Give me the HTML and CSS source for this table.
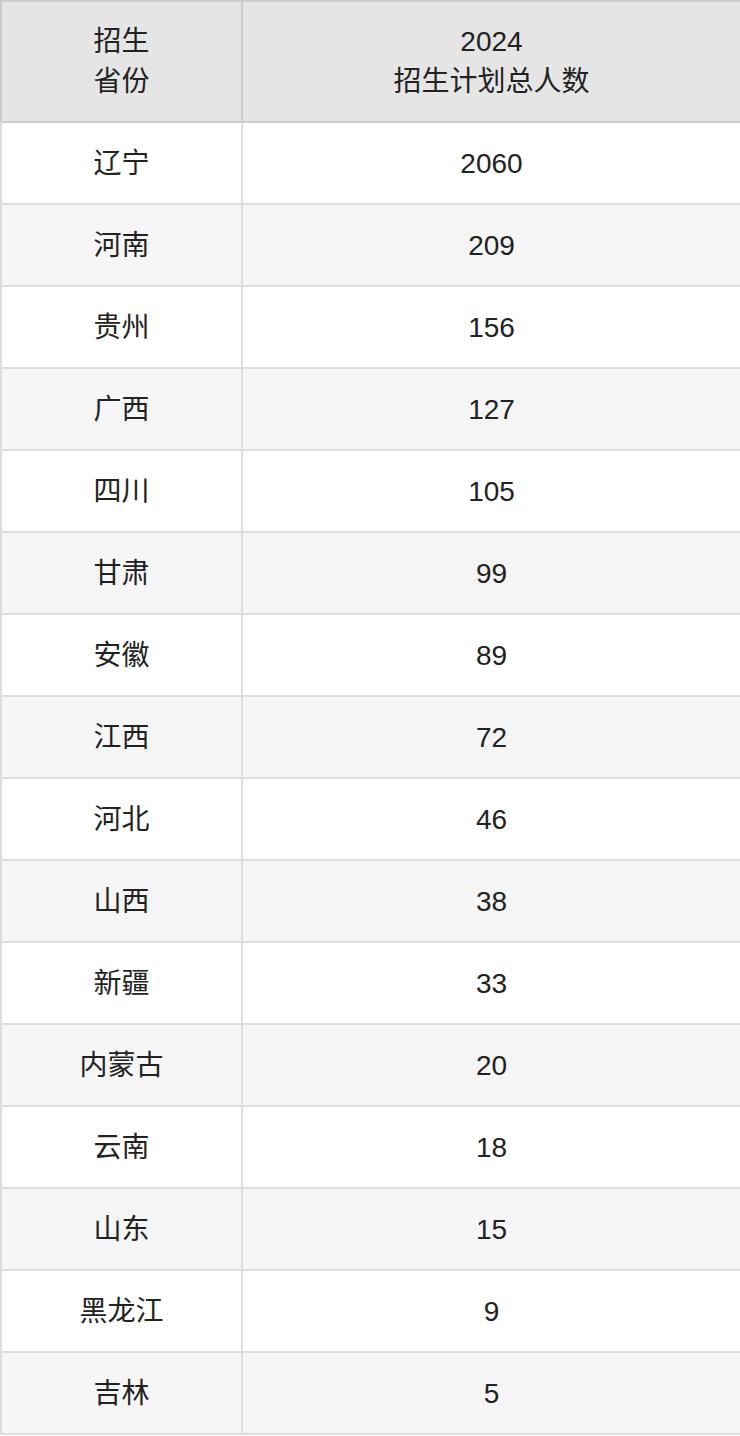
FILE: index.html
```html
<!DOCTYPE html>
<html lang="zh">
<head>
<meta charset="utf-8">
<link rel="stylesheet" href="styles.css">
</head>
<body>
<table class="plan">
  <colgroup><col class="c1"><col class="c2"></colgroup>
  <thead>
    <tr><th>招生<br>省份</th><th>2024<br>招生计划总人数</th></tr>
  </thead>
  <tbody>
    <tr><td>辽宁</td><td>2060</td></tr>
    <tr><td>河南</td><td>209</td></tr>
    <tr><td>贵州</td><td>156</td></tr>
    <tr><td>广西</td><td>127</td></tr>
    <tr><td>四川</td><td>105</td></tr>
    <tr><td>甘肃</td><td>99</td></tr>
    <tr><td>安徽</td><td>89</td></tr>
    <tr><td>江西</td><td>72</td></tr>
    <tr><td>河北</td><td>46</td></tr>
    <tr><td>山西</td><td>38</td></tr>
    <tr><td>新疆</td><td>33</td></tr>
    <tr><td>内蒙古</td><td>20</td></tr>
    <tr><td>云南</td><td>18</td></tr>
    <tr><td>山东</td><td>15</td></tr>
    <tr><td>黑龙江</td><td>9</td></tr>
    <tr><td>吉林</td><td>5</td></tr>
  </tbody>
</table>
</body>
</html>
```
FILE: styles.css
```css
html, body {
  margin: 0;
  padding: 0;
  background: #fff;
}
.plan {
  width: 740px;
  border-collapse: collapse;
  table-layout: fixed;
  font-family: "Liberation Sans", "Noto Sans CJK SC", sans-serif;
  font-size: 28px;
  color: #222;
}
.c1 { width: 241px; }
.c2 { width: 499px; }
.plan th, .plan td {
  text-align: center;
  vertical-align: middle;
  line-height: 40px;
  font-weight: normal;
}
.plan th {
  background: #e5e5e5;
  border: 2px solid #cccccc;
  padding: 20px 0 19px;
}
.plan td {
  border: 2px solid #dddddd;
  padding: 21px 0 19px;
}
.plan tbody tr:nth-child(odd) td { background: #ffffff; }
.plan tbody tr:nth-child(even) td { background: #f5f5f5; }
```
